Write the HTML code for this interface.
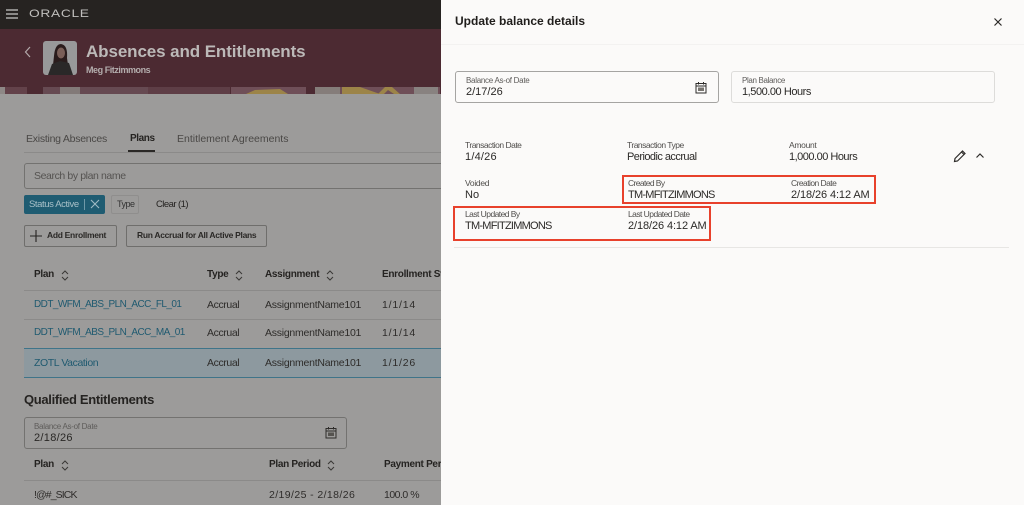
<!DOCTYPE html>
<html lang="en"><head><meta charset="utf-8"><title>Update balance details</title>
<style>
html,body{margin:0;padding:0;width:1024px;height:505px;overflow:hidden;background:#9c9b9a;font-family:"Liberation Sans",sans-serif}
.t{position:absolute;white-space:nowrap;line-height:1;color:#1f1d1b}
.b{position:absolute;box-sizing:border-box}
.l{font-size:8px;color:#5e5c5a}
.v{font-size:11px;color:#2a2826}
.dl{font-size:8.5px;color:#504e4c;letter-spacing:-.5px}
.dv{font-size:11px;color:#2c2a28}
.h{font-size:10px;font-weight:bold;color:#252321;letter-spacing:-.3px}
.c{font-size:10.5px;color:#2e2c2a}
.a{font-size:10px;color:#1f5a70;letter-spacing:-.55px}
svg{position:absolute;overflow:visible}
</style></head><body>
<div class="b" style="left:0;top:0;width:441px;height:29px;background:#262321"></div>
<svg style="left:6px;top:9px" width="12" height="10"><path d="M0 1H12M0 5H12M0 9H12" stroke="#c8c7c5" stroke-width="1.3" fill="none"/></svg>
<div class="t" style="left:29px;top:9px;font-size:11px;color:#c0bfbd;letter-spacing:.55px;transform:scaleX(1.25);transform-origin:0 0">ORACLE</div>
<div class="b" style="left:0;top:29px;width:441px;height:58px;background:#4c2a32"></div>
<svg width="441" height="8" style="left:0;top:87px"><rect width="441" height="7" fill="#4c2a32"/><rect x="0" width="5" height="7" fill="#8e8886"/><rect x="5" width="22" height="7" fill="#63424a"/><rect x="43" width="105" height="7" fill="#664a52"/><rect x="60" width="20" height="7" fill="#827a78"/><rect x="148" width="82" height="7" fill="#5e3e46"/><rect x="231" width="75" height="7" fill="#6f4f58"/><path d="M246 7L255 3L280 2L288 7Z" fill="#9c8448"/><rect x="315" width="125" height="7" fill="#6f4f58"/><rect x="315" width="25" height="7" fill="#857d7a"/><path d="M342 0H360L380 7H342Z" fill="#9c8448"/><path d="M378 7L385 0H392L400 7H394L388 3L384 7Z" fill="#9c8448"/><rect x="414" width="24" height="7" fill="#888280"/></svg>
<svg style="left:24px;top:46px" width="8" height="12"><path d="M6 1L1.5 6L6 11" stroke="#b3a9aa" stroke-width="1.2" fill="none"/></svg>
<svg style="left:43px;top:41px" width="34" height="34"><rect width="34" height="34" rx="3" fill="#98999a"/><path d="M11 15Q12 3 18 3Q25 4 24 17L25 24L10 24Z" fill="#2a1c1c"/><ellipse cx="18" cy="12" rx="4" ry="5.5" fill="#7a5f58"/><path d="M5 34L9 23L17 20L26 22L30 34Z" fill="#2a2828"/></svg>
<div class="t" style="left:86px;top:43px;font-size:17px;font-weight:bold;color:#bcb9b8;letter-spacing:-.1px">Absences and Entitlements</div>
<div class="t" style="left:86px;top:66px;font-size:9px;font-weight:bold;color:#b4aeae;letter-spacing:-.45px">Meg Fitzimmons</div>

<div class="t" style="left:26px;top:134px;font-size:10.5px;color:#4a4846;letter-spacing:-.25px">Existing Absences</div>
<div class="t" style="left:130px;top:134px;font-size:10px;font-weight:bold;color:#252321;letter-spacing:-.4px">Plans</div>
<div class="t" style="left:177px;top:134px;font-size:10.5px;color:#4a4846">Entitlement Agreements</div>
<div class="b" style="left:24px;top:152px;width:417px;height:1px;background:#8b8a89"></div>
<div class="b" style="left:128px;top:150px;width:27px;height:2px;background:#2a2826"></div>

<div class="b" style="left:24px;top:163px;width:420px;height:26px;border:1px solid #737270;border-radius:3px"></div>
<div class="t" style="left:34px;top:171px;font-size:10.5px;color:#555351;letter-spacing:-.4px">Search by plan name</div>
<div class="b" style="left:24px;top:195px;width:81px;height:19px;background:#1f5c72;border-radius:2px"></div>
<div class="t" style="left:29px;top:200px;font-size:9.5px;color:#a9c0c8;letter-spacing:-.4px">Status Active</div>
<div class="b" style="left:84px;top:199px;width:1px;height:11px;background:#6f99a8"></div>
<svg style="left:90px;top:199px" width="10" height="10"><path d="M1 1L9 9M9 1L1 9" stroke="#9fbac4" stroke-width="1.1"/></svg>
<div class="b" style="left:111px;top:195px;width:28px;height:19px;border:1px solid #8f8e8d;border-radius:2px"></div>
<div class="t" style="left:117px;top:200px;font-size:9px;color:#333;letter-spacing:-.5px">Type</div>
<div class="t" style="left:156px;top:200px;font-size:9.5px;color:#252321;letter-spacing:-.55px">Clear (1)</div>

<div class="b" style="left:24px;top:225px;width:93px;height:22px;border:1px solid #6f6e6c;border-radius:2px"></div>
<svg style="left:30px;top:230px" width="12" height="12"><path d="M6 0V12M0 6H12" stroke="#252321" stroke-width="1.1"/></svg>
<div class="t" style="left:47px;top:231px;font-size:8.5px;font-weight:bold;color:#2a2826;letter-spacing:-.3px">Add Enrollment</div>
<div class="b" style="left:126px;top:225px;width:141px;height:22px;border:1px solid #6f6e6c;border-radius:2px"></div>
<div class="t" style="left:137px;top:231px;font-size:8.5px;font-weight:bold;color:#2a2826;letter-spacing:-.3px">Run Accrual for All Active Plans</div>

<div class="t h" style="left:34px;top:270px">Plan</div>
<svg style="left:61px;top:270px" width="8" height="11"><path d="M1 4L4 1L7 4M1 7L4 10L7 7" stroke="#3a3836" fill="none"/></svg>
<div class="t h" style="left:207px;top:270px">Type</div>
<svg style="left:235px;top:270px" width="8" height="11"><path d="M1 4L4 1L7 4M1 7L4 10L7 7" stroke="#3a3836" fill="none"/></svg>
<div class="t h" style="left:265px;top:270px">Assignment</div>
<svg style="left:326px;top:270px" width="8" height="11"><path d="M1 4L4 1L7 4M1 7L4 10L7 7" stroke="#3a3836" fill="none"/></svg>
<div class="t h" style="left:382px;top:270px">Enrollment St</div>
<div class="b" style="left:24px;top:290px;width:417px;height:1px;background:#8b8a89"></div>
<div class="t a" style="left:34px;top:300px">DDT_WFM_ABS_PLN_ACC_FL_01</div>
<div class="t c" style="left:207px;top:300px;letter-spacing:-.4px">Accrual</div>
<div class="t c" style="left:265px;top:300px;letter-spacing:-.25px">AssignmentName101</div>
<div class="t c" style="left:382px;top:300px;letter-spacing:.8px">1/1/14</div>
<div class="b" style="left:24px;top:319px;width:417px;height:1px;background:#8b8a89"></div>
<div class="t a" style="left:34px;top:328px">DDT_WFM_ABS_PLN_ACC_MA_01</div>
<div class="t c" style="left:207px;top:328px;letter-spacing:-.4px">Accrual</div>
<div class="t c" style="left:265px;top:328px;letter-spacing:-.25px">AssignmentName101</div>
<div class="t c" style="left:382px;top:328px;letter-spacing:.8px">1/1/14</div>
<div class="b" style="left:24px;top:348px;width:417px;height:30px;background:#8d999f;border-top:1px solid #3f7489;border-bottom:1px solid #3f7489"></div>
<div class="t a" style="left:34px;top:358px;font-size:10.5px;letter-spacing:-.4px">ZOTL Vacation</div>
<div class="t c" style="left:207px;top:358px;letter-spacing:-.4px">Accrual</div>
<div class="t c" style="left:265px;top:358px;letter-spacing:-.25px">AssignmentName101</div>
<div class="t c" style="left:382px;top:358px;letter-spacing:.8px">1/1/26</div>

<div class="t" style="left:24px;top:393px;font-size:13px;font-weight:bold;color:#252321;letter-spacing:-.33px">Qualified Entitlements</div>
<div class="b" style="left:24px;top:417px;width:323px;height:32px;border:1px solid #737270;border-radius:3px"></div>
<div class="t l" style="left:34px;top:423px;letter-spacing:-.28px">Balance As-of Date</div>
<div class="t v" style="left:34px;top:433px;letter-spacing:.3px">2/18/26</div>
<svg style="left:325px;top:426px" width="12" height="13"><path d="M1 2.5H11V12H1ZM1 5H11M3.5 1V3.5M8.5 1V3.5" stroke="#2e2c2a" fill="none"/><rect x="3" y="6.5" width="6" height="3.5" fill="#55534f"/></svg>
<div class="t h" style="left:34px;top:460px">Plan</div>
<svg style="left:61px;top:460px" width="8" height="11"><path d="M1 4L4 1L7 4M1 7L4 10L7 7" stroke="#3a3836" fill="none"/></svg>
<div class="t h" style="left:269px;top:460px">Plan Period</div>
<svg style="left:327px;top:460px" width="8" height="11"><path d="M1 4L4 1L7 4M1 7L4 10L7 7" stroke="#3a3836" fill="none"/></svg>
<div class="t h" style="left:384px;top:460px">Payment Per</div>
<div class="b" style="left:24px;top:480px;width:417px;height:1px;background:#8b8a89"></div>
<div class="t c" style="left:34px;top:490px;letter-spacing:-.9px">!@#_SICK</div>
<div class="t c" style="left:269px;top:490px;letter-spacing:.4px">2/19/25 - 2/18/26</div>
<div class="t c" style="left:384px;top:490px;letter-spacing:-.5px">100.0 %</div>

<div class="b" style="left:441px;top:0;width:583px;height:505px;background:#fbfaf9"></div>
<div class="b" style="left:441px;top:44px;width:583px;height:1px;background:#f3f2f1"></div>
<div class="t" style="left:455px;top:15px;font-size:12px;font-weight:bold;color:#201e1c">Update balance details</div>
<svg style="left:994px;top:18px" width="8" height="8"><path d="M.5 .5L7.5 7.5M7.5 .5L.5 7.5" stroke="#2a2826" stroke-width="1.2"/></svg>

<div class="b" style="left:455px;top:71px;width:264px;height:32px;border:1px solid #a5a4a2;border-radius:3px"></div>
<div class="t l" style="left:466px;top:77px;letter-spacing:-.28px">Balance As-of Date</div>
<div class="t v" style="left:466px;top:87px">2/17/26</div>
<svg style="left:695px;top:81px" width="12" height="13"><path d="M1 2.5H11V12H1ZM1 5H11M3.5 1V3.5M8.5 1V3.5" stroke="#2e2c2a" fill="none"/><rect x="3" y="6.5" width="6" height="3.5" fill="#77746f"/></svg>
<div class="b" style="left:731px;top:71px;width:264px;height:32px;border:1px solid #dddcda;border-radius:3px"></div>
<div class="t l" style="left:742px;top:77px;letter-spacing:-.35px">Plan Balance</div>
<div class="t v" style="left:742px;top:87px;letter-spacing:-.45px">1,500.00 Hours</div>

<div class="t dl" style="left:465px;top:141px">Transaction Date</div>
<div class="t dv" style="left:465px;top:152px;letter-spacing:.2px">1/4/26</div>
<div class="t dl" style="left:627px;top:141px">Transaction Type</div>
<div class="t dv" style="left:627px;top:152px;letter-spacing:-.55px">Periodic accrual</div>
<div class="t dl" style="left:789px;top:141px;letter-spacing:-.3px">Amount</div>
<div class="t dv" style="left:789px;top:152px;letter-spacing:-.5px">1,000.00 Hours</div>
<svg style="left:953px;top:149px" width="14" height="14"><path d="M1.5 12.5L2 9.5L9.500 2L12 4.500L4.500 12ZM8.500 3L11 5.500" stroke="#2e2c2a" stroke-width="1.2" fill="none"/></svg>
<svg style="left:976px;top:153px" width="8" height="5"><path d="M.5 4.500L4 1L7.500 4.500" stroke="#2e2c2a" stroke-width="1.2" fill="none"/></svg>

<div class="t dl" style="left:465px;top:179px;letter-spacing:-.3px">Voided</div>
<div class="t dv" style="left:465px;top:190px">No</div>
<div class="t dl" style="left:628px;top:179px;letter-spacing:-.6px">Created By</div>
<div class="t dv" style="left:628px;top:190px;letter-spacing:-.75px">TM-MFITZIMMONS</div>
<div class="t dl" style="left:791px;top:179px;letter-spacing:-.55px">Creation Date</div>
<div class="t dv" style="left:791px;top:190px;letter-spacing:-.1px">2/18/26 4:12 AM</div>
<div class="b" style="left:622px;top:175px;width:254px;height:29px;border:2px solid #e8412c"></div>

<div class="t dl" style="left:465px;top:210px;letter-spacing:-.55px">Last Updated By</div>
<div class="t dv" style="left:465px;top:221px;letter-spacing:-.75px">TM-MFITZIMMONS</div>
<div class="t dl" style="left:628px;top:210px;letter-spacing:-.55px">Last Updated Date</div>
<div class="t dv" style="left:628px;top:221px;letter-spacing:-.1px">2/18/26 4:12 AM</div>
<div class="b" style="left:453px;top:206px;width:258px;height:35px;border:2px solid #e8412c"></div>
<div class="b" style="left:454px;top:247px;width:555px;height:1px;background:#e7e6e4"></div>
</body></html>
